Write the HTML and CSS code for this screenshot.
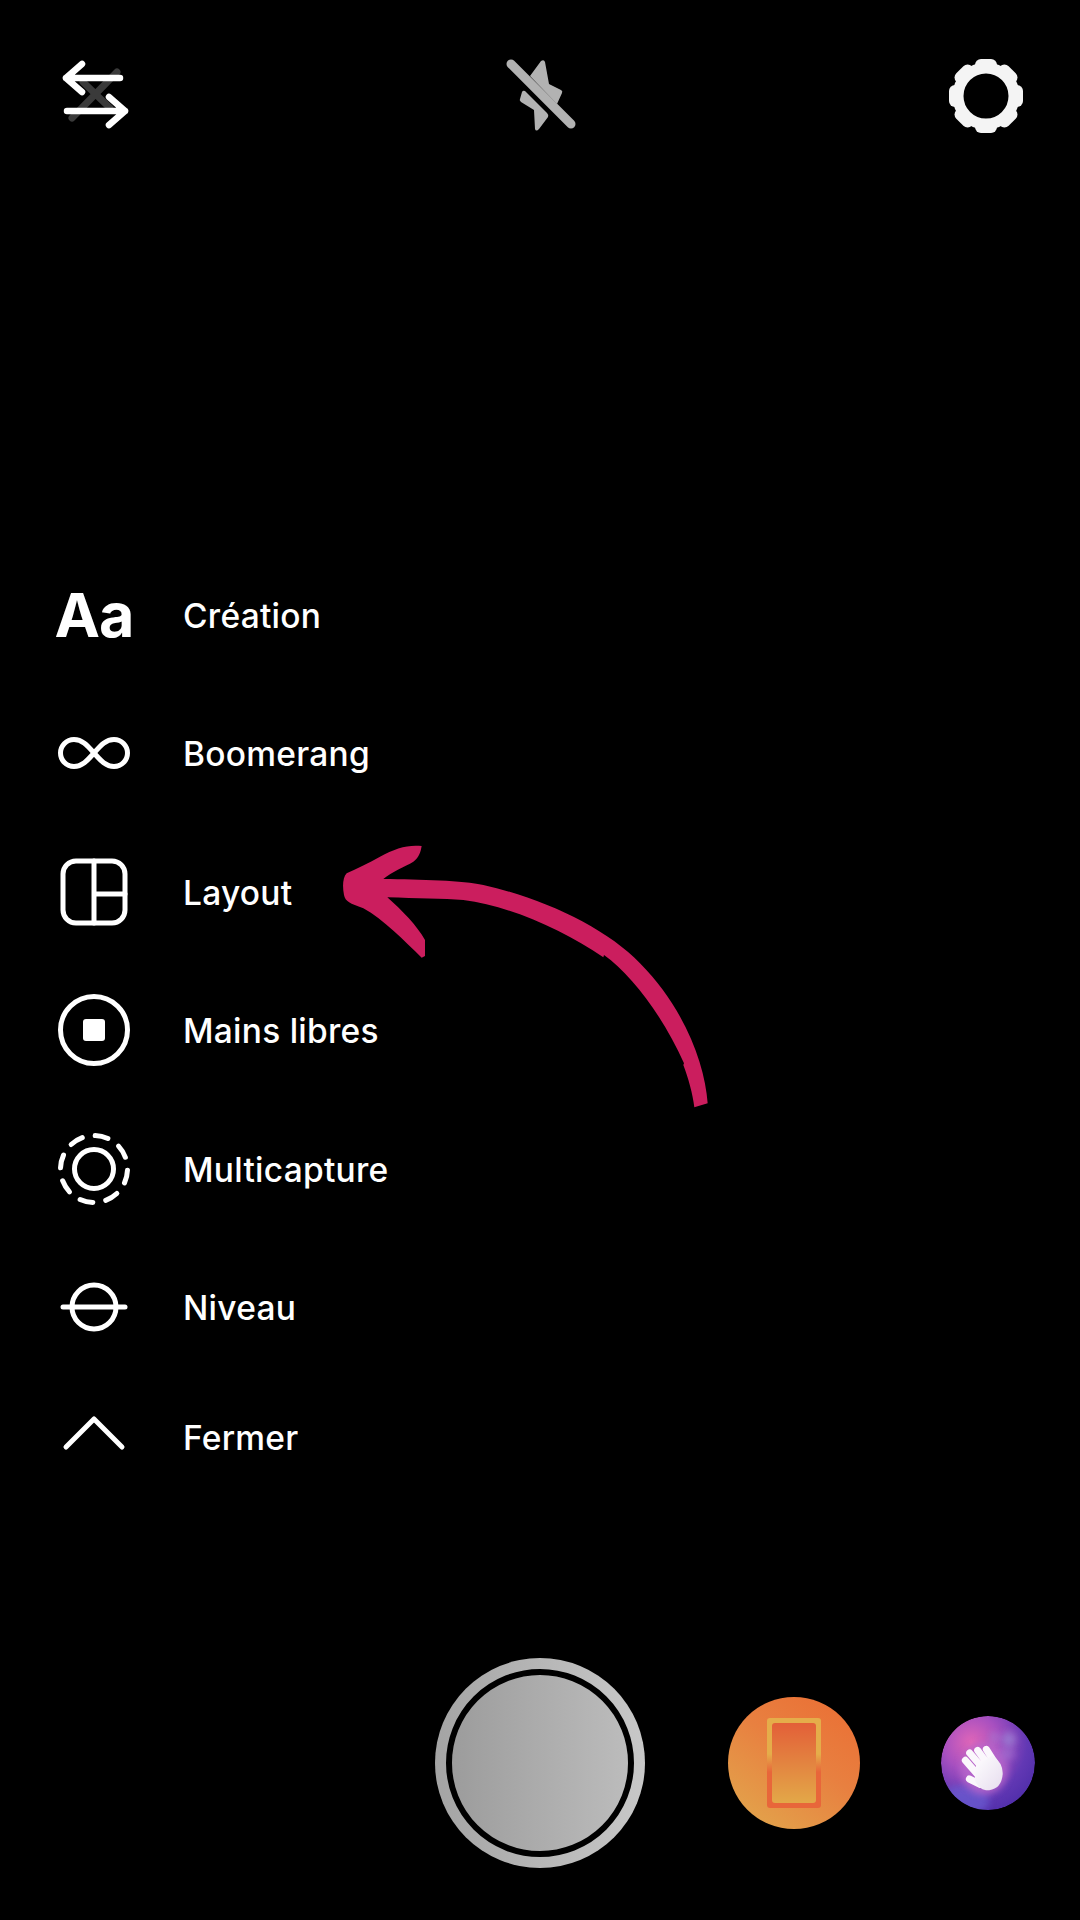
FILE: index.html
```html
<!DOCTYPE html>
<html lang="fr">
<head>
<meta charset="utf-8">
<title>Caméra</title>
<link rel="stylesheet" href="styles.css">
</head>
<body>
<main class="screen">
  <header class="topbar">
    <svg class="top-icon" viewBox="55 55 80 80">
      <g class="dim-stroke"><path d="M117 72 72 118M83 82l27 26"/></g>
      <g class="line-top"><path d="M120 78H66M82 64 66 78l16 14M67 111h58M109 97l16 14-16 14"/></g>
    </svg>
    <svg class="top-icon" viewBox="501 55 80 80">
      <path class="flash" d="M530 76 541 61q3-2 4 1l4 22 12 6q2 1 1 3l-5 11Z"/>
      <path class="flash" d="M522 92q1-2 3-1l22 22q2 2 1 4l-9 12q-3 3-4 0l-1-19-13-8q-2-2-1-3Z"/>
      <path class="flash-slash" d="M511 64l60 60"/>
    </svg>
    <svg class="top-icon" viewBox="946 55 80 80">
      <g class="gear-teeth">
        <rect x="975" y="59" width="22" height="13" rx="6"/>
        <rect x="975" y="59" width="22" height="13" rx="6" transform="rotate(45 986 96)"/>
        <rect x="975" y="59" width="22" height="13" rx="6" transform="rotate(90 986 96)"/>
        <rect x="975" y="59" width="22" height="13" rx="6" transform="rotate(135 986 96)"/>
        <rect x="975" y="59" width="22" height="13" rx="6" transform="rotate(180 986 96)"/>
        <rect x="975" y="59" width="22" height="13" rx="6" transform="rotate(225 986 96)"/>
        <rect x="975" y="59" width="22" height="13" rx="6" transform="rotate(270 986 96)"/>
        <rect x="975" y="59" width="22" height="13" rx="6" transform="rotate(315 986 96)"/>
      </g>
      <circle class="gear-ring" cx="986" cy="96" r="28"/>
    </svg>
  </header>

  <ul class="menu">
    <li class="row">
      <span class="aa">Aa</span>
      <span class="label">Création</span>
    </li>
    <li class="row">
      <svg class="row-icon" viewBox="54 713 80 80"><path class="line" d="M94 753c-7-8-12-13.500-20-13.500a13.500 13.500 0 0 0 0 27c8 0 13-5.500 20-13.500s12-13.500 20-13.500a13.500 13.500 0 0 1 0 27c-8 0-13-5.500-20-13.500Z"/></svg>
      <span class="label">Boomerang</span>
    </li>
    <li class="row">
      <svg class="row-icon" viewBox="54 851 80 80"><rect class="line" x="63" y="860" width="62" height="62" rx="13"/><path class="line" d="M94 860v62M94 893h31"/></svg>
      <span class="label">Layout</span>
    </li>
    <li class="row">
      <svg class="row-icon" viewBox="54 990 80 80"><circle class="line" cx="94" cy="1030" r="33.500"/><rect class="fill" x="83" y="1019" width="22" height="22" rx="3"/></svg>
      <span class="label">Mains libres</span>
    </li>
    <li class="row">
      <svg class="row-icon" viewBox="54 1128 80 80"><circle class="dashes" cx="94" cy="1168" r="33.500" pathLength="80" transform="rotate(-88 94 1168)"/><circle class="line" cx="94" cy="1168" r="19.500"/></svg>
      <span class="label">Multicapture</span>
    </li>
    <li class="row">
      <svg class="row-icon" viewBox="54 1267 80 80"><circle class="line" cx="94" cy="1307" r="22"/><path class="line" d="M63 1307h62"/></svg>
      <span class="label">Niveau</span>
    </li>
    <li class="row row-close">
      <svg class="row-icon" viewBox="54 1398 80 80"><path class="line" d="M66 1448l28-28 28 28"/></svg>
      <span class="label">Fermer</span>
    </li>
  </ul>

  <section class="controls">
    <div class="shutter"><div class="shutter-core"></div></div>
    <div class="format"><div class="phone"><div class="phone-inner"></div></div></div>
    <svg class="effect" viewBox="35 47 282 282">
      <defs>
        <radialGradient id="effectBase" cx="0.32" cy="0.28" r="0.85">
          <stop offset="0" stop-color="#e066b8"/>
          <stop offset="0.35" stop-color="#a850c0"/>
          <stop offset="0.7" stop-color="#6238b4"/>
          <stop offset="1" stop-color="#4c2ca8"/>
        </radialGradient>
        <linearGradient id="handFill" x1="0" y1="0" x2="1" y2="1">
          <stop offset="0" stop-color="#ffffff"/>
          <stop offset="1" stop-color="#e6dcee"/>
        </linearGradient>
        <filter id="soft" x="-40%" y="-40%" width="180%" height="180%"><feGaussianBlur stdDeviation="11"/></filter>
        <clipPath id="effectClip"><circle cx="176" cy="188" r="141"/></clipPath>
      </defs>
      <g clip-path="url(#effectClip)">
        <circle cx="176" cy="188" r="141" fill="url(#effectBase)"/>
        <ellipse cx="105" cy="300" rx="75" ry="45" fill="#6a5cd0" opacity=".75" filter="url(#soft)"/>
        <ellipse cx="165" cy="205" rx="72" ry="78" fill="#b868cc" opacity=".8" filter="url(#soft)"/>
        <ellipse cx="238" cy="118" rx="22" ry="24" fill="#9a78d0" opacity=".9" filter="url(#soft)"/>
        <ellipse cx="195" cy="112" rx="14" ry="18" fill="#a878d0" opacity=".7" filter="url(#soft)"/>
        <ellipse cx="235" cy="160" rx="22" ry="20" fill="#a070d0" opacity=".7" filter="url(#soft)"/>
      </g>
      <g class="hand">
        <path class="finger" d="M108 180 148 226M121 158 164 208M145 150 178 195M171 147 198 190M120 236 152 252"/>
        <path class="palm" d="M140 195 190 165Q222 190 220 222 216 270 170 270 148 268 136 240Z"/>
      </g>
    </svg>
  </section>

  <svg class="arrow" viewBox="0 0 1200 930">
    <path d="M1093 862 1133 850C1125 730 1060 560 930 430 830 325 640 235 460 195 400 182 270 178 160 177 185 155 225 140 250 125 268 112 272 95 275 78 235 73 195 85 150 110 115 130 80 145 50 160 38 172 37 200 42 225 46 245 60 250 100 265 160 298 225 365 275 413L285 408 285 360C262 318 215 270 172 232 260 235 340 236 400 240 540 258 700 330 820 412L822 405C905 465 1000 590 1062 730L1060 735C1075 775 1088 820 1093 862Z"/>
  </svg>
</main>
</body>
</html>
```

FILE: styles.css
```css
* { box-sizing: border-box; }

html, body {
  margin: 0;
  background: #000;
}

.screen {
  position: relative;
  width: 1080px;
  height: 1920px;
  overflow: hidden;
  background: #000;
  color: #fff;
  font-family: Inter, "Liberation Sans", sans-serif;
}

svg { display: block; }

.topbar {
  display: flex;
  justify-content: space-between;
  padding: 55px 54px 0 55px;
}

.top-icon {
  width: 80px;
  height: 80px;
  fill: none;
}

.line, .line-top, .dashes, .dim-stroke, .flash-slash {
  fill: none;
  stroke: #fff;
  stroke-linecap: round;
  stroke-linejoin: round;
}

.line { stroke-width: 5; }
.line-top { stroke-width: 6.500; }
.fill { fill: #fff; }
.dim-stroke { stroke: #3a3a3a; stroke-width: 7; }

.dashes {
  stroke-width: 5;
  stroke-dasharray: 5 5;
}

.flash { fill: #b2b2b2; }
.flash-slash { stroke: #b2b2b2; stroke-width: 9; }

.gear-teeth { fill: #f4f4f4; }
.gear-ring { fill: none; stroke: #f4f4f4; stroke-width: 11; }

.menu {
  display: flex;
  flex-direction: column;
  gap: 58.400px;
  margin: 440px 0 0;
  padding: 0 0 0 54px;
  list-style: none;
}

.row {
  display: flex;
  align-items: center;
  gap: 49px;
  height: 80px;
}

.row-close { margin-top: -8px; }

.row-icon {
  width: 80px;
  height: 80px;
  flex: none;
}

.aa {
  width: 80px;
  flex: none;
  font-size: 61px;
  font-weight: 700;
  line-height: 78px;
  letter-spacing: -1px;
  text-align: center;
}

.label {
  position: relative;
  top: 1px;
  font-size: 33.500px;
  font-weight: 500;
  letter-spacing: 0.25px;
  line-height: 40px;
  color: #fff;
}

.controls {
  display: flex;
  align-items: center;
  margin-top: 181px;
  padding-left: 435px;
}

.shutter {
  width: 210px;
  height: 210px;
  padding: 11px;
  border-radius: 50%;
  background: linear-gradient(90deg, #a4a4a4, #c8c8c8);
}

.shutter-core {
  width: 188px;
  height: 188px;
  border: 6px solid #000;
  border-radius: 50%;
  background: linear-gradient(90deg, #9c9c9c, #bcbcbc);
  background-clip: padding-box;
}

.format {
  display: flex;
  align-items: center;
  justify-content: center;
  width: 132px;
  height: 132px;
  margin-left: 83px;
  border-radius: 50%;
  background: linear-gradient(215deg, #ea7136 10%, #e88040 45%, #e2a64c 95%);
}

.phone {
  width: 54px;
  height: 90px;
  padding: 5px;
  border-radius: 3px;
  background: linear-gradient(180deg, #e5ad4a 40%, #e8663a 60%);
}

.phone-inner {
  width: 100%;
  height: 100%;
  border-radius: 3px;
  background: linear-gradient(180deg, #e35f38, #e3a848);
}

.effect {
  width: 94px;
  height: 94px;
  margin-left: 81px;
}

.finger {
  fill: none;
  stroke: #fbf7fc;
  stroke-width: 21;
  stroke-linecap: round;
}

.palm { fill: url(#handFill); }

.arrow {
  position: absolute;
  left: 330px;
  top: 820px;
  width: 400px;
  height: 310px;
  fill: #cb1e5e;
}
```
